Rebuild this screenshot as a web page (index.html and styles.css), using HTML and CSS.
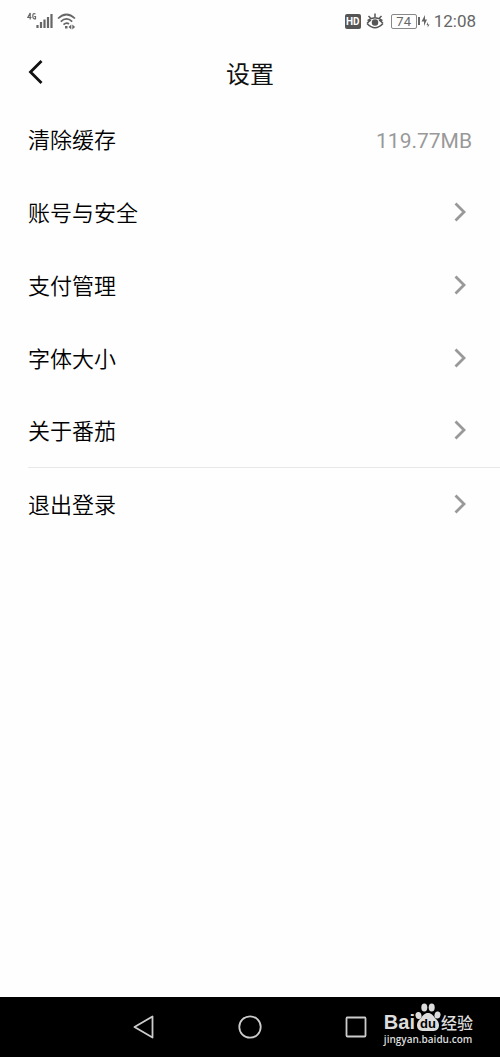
FILE: index.html
```html
<!DOCTYPE html>
<html lang="zh-CN">
<head>
<meta charset="utf-8">
<meta name="viewport" content="width=device-width, initial-scale=1">
<title>设置</title>
<link rel="stylesheet" href="styles.css">
</head>
<body>
<div class="screen">
  <div class="status">
    <div class="status-group signals">
      <svg width="26" height="18" viewBox="0 0 26 18" fill="none" stroke="#666" aria-hidden="true">
        <path d="M3.2 7.500V1L.8 5.500H4.500M8.500 2Q5.800.5 5.800 4T8.500 6.800V4.500H7.200" stroke-width="1.200"/>
        <path d="M10.5 16v-3M14 16V10M17.500 16V7.500M21 16V5M24.500 16V2" stroke-width="2.200"/>
      </svg>
      <svg width="20" height="18" viewBox="0 0 20 18" fill="none" stroke="#666" stroke-width="1.700" aria-hidden="true">
        <path d="M1 6.500Q9.500-1.500 18 6.500M3.800 9.700Q9.500 4.200 15.200 9.700M6.500 12.700Q9.500 9.800 12 12"/>
        <path d="M8 14h2.500v2.500H8z" fill="#666" stroke="none"/>
        <path d="M14.300 12.500l-2.800 2.500 2.800 2.500zM15.300 12.500l2.800 2.500-2.800 2.500z" fill="#666" stroke="none"/>
      </svg>
    </div>
    <div class="status-group">
      <span class="hd">HD</span>
      <svg class="eye" width="18" height="18" viewBox="0 0 18 18" fill="none" stroke="#555" stroke-width="1.500" aria-hidden="true">
        <path d="M1.500 8.500Q9 3 16.500 8.500M1 11.500Q9 20 17 11.500M1 11.500Q3 9 5 8M17 11.500Q15 9 13 8M2.500 4L4.500 6M9 1.500V5M15.500 4L13.500 6"/>
        <circle cx="9" cy="10.500" r="2.500" fill="#555"/>
      </svg>
      <span class="battery">74</span>
      <svg width="13" height="16" viewBox="0 0 13 16" fill="#666" aria-hidden="true">
        <path d="M1 4h2v8H1zM8 2L4.500 8.500H7V13L10 6.500H8zM11 9L9.500 12h1.200v2.500L12.500 11.500h-1.500z"/>
      </svg>
      <time class="clock">12:08</time>
    </div>
  </div>

  <header class="header">
    <button class="back" type="button" aria-label="返回">
      <svg width="16" height="26" viewBox="0 0 16 26" fill="none" stroke="#111" stroke-width="2.800" aria-hidden="true"><path d="M13.500 2L2.500 13L13.500 24"/></svg>
    </button>
    <h1 class="title">设置</h1>
  </header>

  <main class="settings">
    <button class="row" type="button"><span class="label">清除缓存</span><span class="size">119.77MB</span></button>
    <a class="row" href="#security"><span class="label">账号与安全</span><svg class="chevron" viewBox="0 0 12 20" aria-hidden="true"><path d="M1.500 1.500L10 10L1.500 18.500"/></svg></a>
    <a class="row" href="#payment"><span class="label">支付管理</span><svg class="chevron" viewBox="0 0 12 20" aria-hidden="true"><path d="M1.500 1.500L10 10L1.500 18.500"/></svg></a>
    <a class="row" href="#font"><span class="label">字体大小</span><svg class="chevron" viewBox="0 0 12 20" aria-hidden="true"><path d="M1.500 1.500L10 10L1.500 18.500"/></svg></a>
    <a class="row divided" href="#about"><span class="label">关于番茄</span><svg class="chevron" viewBox="0 0 12 20" aria-hidden="true"><path d="M1.500 1.500L10 10L1.500 18.500"/></svg></a>
    <a class="row" href="#logout"><span class="label">退出登录</span><svg class="chevron" viewBox="0 0 12 20" aria-hidden="true"><path d="M1.500 1.500L10 10L1.500 18.500"/></svg></a>
  </main>

  <nav class="navbar" aria-label="系统导航">
    <button class="key" type="button" aria-label="后退"><svg width="24" height="24" viewBox="0 0 24 24"><path d="M2.500 12L20.500 1.500V22.500z"/></svg></button>
    <button class="key" type="button" aria-label="主页"><svg width="24" height="24" viewBox="0 0 24 24"><circle cx="12" cy="12" r="10.700"/></svg></button>
    <button class="key" type="button" aria-label="最近任务"><svg width="24" height="24" viewBox="0 0 24 24"><rect x="2.500" y="2.500" width="19" height="19" rx="1"/></svg></button>
    <div class="watermark">
      <div class="brand">
        <span class="bai">Bai</span>
        <span class="paw">
          <svg width="26" height="28" viewBox="0 0 26 28" fill="#ddd" aria-hidden="true">
            <ellipse cx="3.500" cy="12.500" rx="3" ry="3.600" transform="rotate(-12 3.500 12.500)"/>
            <ellipse cx="9.300" cy="4.500" rx="3" ry="4"/>
            <ellipse cx="16.700" cy="4.500" rx="3" ry="4"/>
            <ellipse cx="22.500" cy="12" rx="3" ry="3.600" transform="rotate(12 22.500 12)"/>
            <path d="M13 10C17 10 18 13 21 16C26 20.500 24.500 28 18.500 28H7.500C1.500 28 0 20.500 5 16C8 13 9 10 13 10z"/>
          </svg>
          <span class="du">du</span>
        </span>
        <span class="jingyan">经验</span>
      </div>
      <div class="site">jingyan.baidu.com</div>
    </div>
  </nav>
</div>
</body>
</html>
```

FILE: styles.css
```css
* { box-sizing: border-box; }

body {
  margin: 0;
  background: #fefefe;
  color: #111;
  font-family: Roboto, "Noto Sans CJK SC", sans-serif;
}

button {
  border: 0;
  padding: 0;
  background: none;
  color: inherit;
  font: inherit;
}

svg { display: block; flex: none; }

.screen {
  display: flex;
  flex-direction: column;
  min-height: 100vh;
}

.status {
  display: flex;
  align-items: center;
  justify-content: space-between;
  height: 42px;
  padding: 0 24px 0 27px;
  color: #666;
}

.status-group { display: flex; align-items: center; gap: 4px; }

.hd {
  width: 16px;
  border-radius: 2px;
  background: #555;
  color: #fff;
  font-size: 10px;
  font-weight: 700;
  line-height: 15px;
  text-align: center;
}

.eye { margin: 0 3px 0 1px; }

.battery {
  width: 26px;
  margin-right: -4px;
  border: 1px solid #888;
  border-radius: 2px;
  font-size: 13px;
  line-height: 13px;
  text-align: center;
}

.clock { font-size: 17px; line-height: 20px; }

.header {
  display: grid;
  grid-template-columns: 48px 1fr 48px;
  align-items: center;
  height: 61px;
  padding: 0 14px;
}

.back { display: flex; padding: 0 0 2px 14px; }

.title {
  grid-column: 2;
  margin: 0;
  padding-top: 4px;
  font-size: 24px;
  font-weight: 400;
  line-height: 36px;
  text-align: center;
}

.settings {
  display: flex;
  flex: 1;
  flex-direction: column;
  padding-left: 28px;
}

.row {
  display: flex;
  align-items: center;
  justify-content: space-between;
  height: 73px;
  padding-right: 28px;
  color: #000;
  font-size: 22px;
  line-height: 32px;
  text-decoration: none;
}

.label { padding-top: 2px; font-weight: 350; }

.divided { border-bottom: 1px solid #e8e8e8; }

.size { padding-top: 2px; color: #999; font-size: 21px; }

.chevron {
  width: 12px;
  height: 20px;
  margin: 0 6px 2px 0;
  fill: none;
  stroke: #999;
  stroke-width: 2.800;
}

.navbar {
  position: relative;
  display: flex;
  align-items: center;
  justify-content: center;
  gap: 82px;
  height: 60px;
  background: #000;
}

.key svg {
  fill: none;
  stroke: #ccc;
  stroke-width: 1.800;
  stroke-linejoin: round;
}

.watermark {
  position: absolute;
  right: 27px;
  bottom: 12px;
  color: #ddd;
  font-family: "Open Sans", "Noto Sans CJK SC", sans-serif;
}

.brand { display: flex; align-items: flex-end; height: 30px; padding-bottom: 2px; }

.bai {
  font-family: "Liberation Sans", sans-serif;
  font-size: 20px;
  font-weight: 700;
  line-height: 18px;
}

.paw { position: relative; }

.du {
  position: absolute;
  inset: auto 0 0;
  color: #000;
  font-family: "Liberation Sans", sans-serif;
  font-size: 13px;
  font-weight: 700;
  line-height: 14px;
  text-align: center;
}

.jingyan { font-size: 16px; font-weight: 500; line-height: 16px; }

.site { font-size: 10px; font-weight: 600; line-height: 12px; }
```
